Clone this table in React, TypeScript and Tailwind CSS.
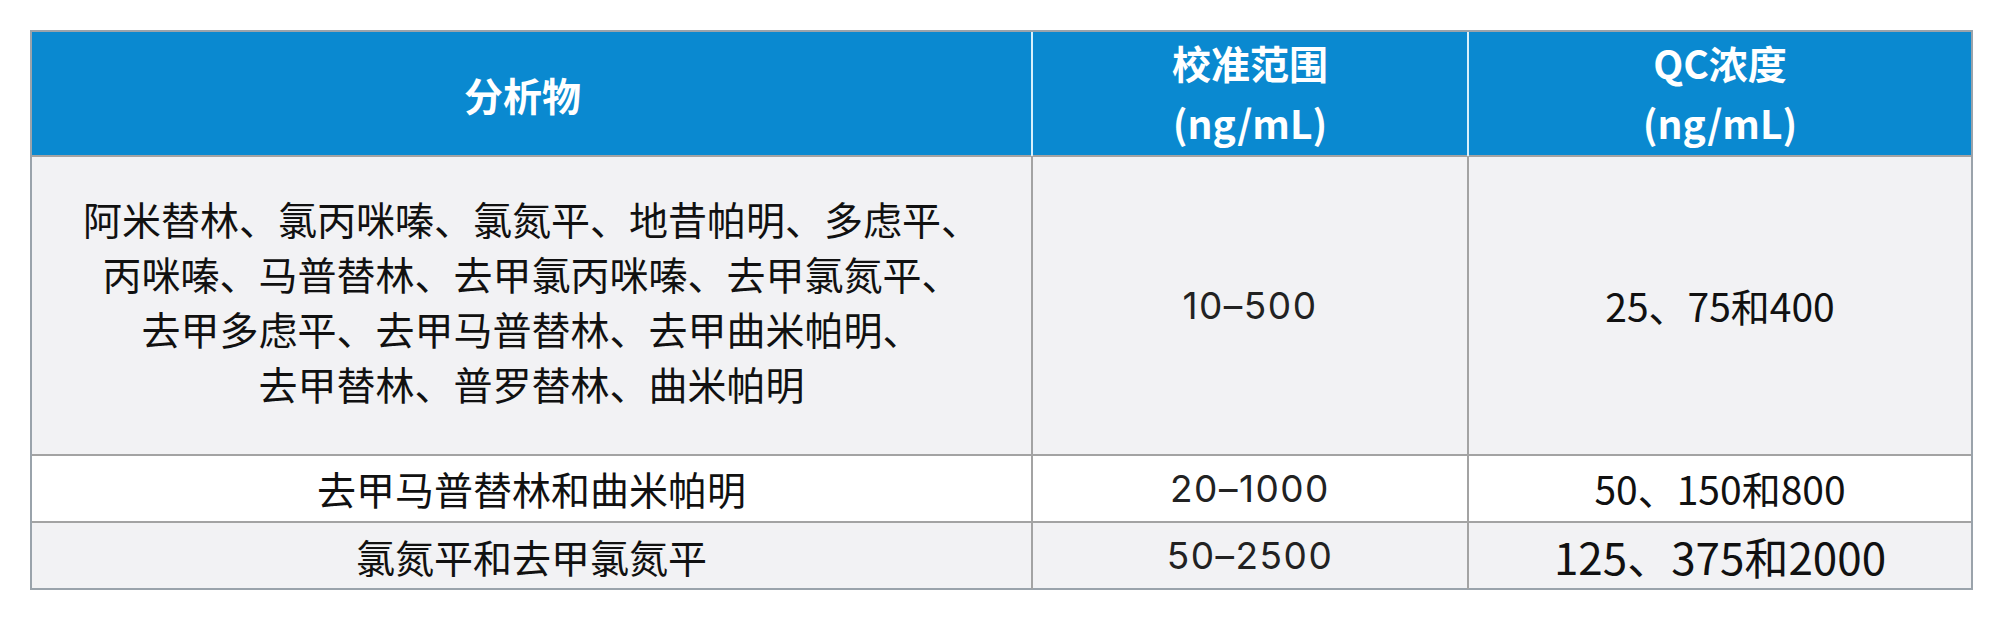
const cjk = "font-['Noto_Sans_CJK_SC',sans-serif]";
const num = "font-['Inter','Noto_Sans_CJK_SC',sans-serif]";

const analyteLines = [
  "阿米替林、氯丙咪嗪、氯氮平、地昔帕明、多虑平、",
  "丙咪嗪、马普替林、去甲氯丙咪嗪、去甲氯氮平、",
  "去甲多虑平、去甲马普替林、去甲曲米帕明、",
  "去甲替林、普罗替林、曲米帕明",
];

const rows = [
  { analyte: analyteLines, range: "10–500", qc: "25、75和400", h: "h-[299px]", bg: "bg-[#f2f2f4]", qcSize: "text-[39px]", pad: "pb-[10px]" },
  { analyte: ["去甲马普替林和曲米帕明"], range: "20–1000", qc: "50、150和800", h: "h-[67px]", bg: "bg-white", qcSize: "text-[39px]", pad: "" },
  { analyte: ["氯氮平和去甲氯氮平"], range: "50–2500", qc: "125、375和2000", h: "h-[67px]", bg: "bg-[#f2f2f4]", qcSize: "text-[44px]", pad: "" },
];

export default function App() {
  return (
    <div className="h-[626px] w-[2000px] bg-white pl-[30px] pt-[30px]">
      <div className="w-[1943px] border-2 border-[#9aa3ab]">
        {/* header */}
        <div className={`grid h-[123px] grid-cols-[1001px_436px_1fr] bg-[#0a89d0] text-[39px] font-bold leading-[60px] text-white ${cjk}`}>
          <div className="flex items-center justify-center border-r-2 border-[#d8f0fb] pr-[18px]">分析物</div>
          <div className="flex flex-col items-center justify-center border-r-2 border-[#d8f0fb] pb-[4px]">
            <span>校准范围</span>
            <span>(ng/mL)</span>
          </div>
          <div className="flex flex-col items-center justify-center pb-[4px]">
            <span>QC浓度</span>
            <span>(ng/mL)</span>
          </div>
        </div>

        {rows.map((r, i) => (
          <div
            key={i}
            className={`grid grid-cols-[1001px_436px_1fr] border-t-2 border-[#a3a3a3] ${r.h} ${r.bg}`}
          >
            <div className={`flex flex-col items-center justify-center border-r-2 border-[#a3a3a3] text-[39px] leading-[55px] text-[#111] ${r.pad} ${cjk}`}>
              {r.analyte.map((l) => (
                <span key={l}>{l}</span>
              ))}
            </div>
            <div className={`flex items-center justify-center border-r-2 border-[#a3a3a3] text-[37px] tracking-[0.04em] text-[#222] ${num}`}>
              {r.range}
            </div>
            <div className={`flex items-center justify-center text-[#111] ${r.qcSize} ${cjk}`}>{r.qc}</div>
          </div>
        ))}
      </div>
    </div>
  );
}
